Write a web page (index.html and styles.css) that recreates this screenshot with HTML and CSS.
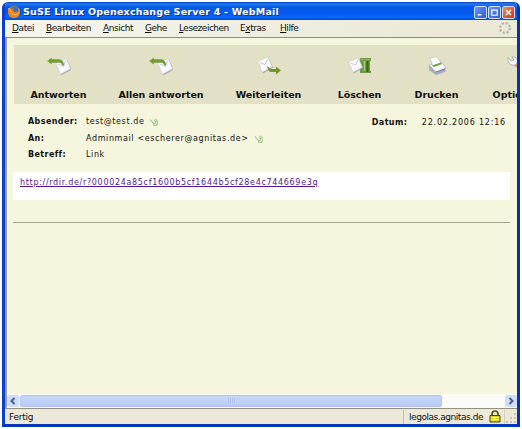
FILE: index.html
```
<!DOCTYPE html>
<html lang="de">
<head>
<meta charset="utf-8">
<title>SuSE Linux Openexchange Server 4 - WebMail</title>
<link rel="stylesheet" href="styles.css">
</head>
<body>
<svg class="defs" width="0" height="0" aria-hidden="true">
  <defs>
    <linearGradient id="paper" x1="0" y1="0" x2="1" y2="1"><stop offset="0" stop-color="#fff"/><stop offset=".6" stop-color="#fafaff"/><stop offset="1" stop-color="#dfe0ec"/></linearGradient>
    <g id="envelope">
      <path d="M1 5 12 0 17 11 6 17Z" fill="#8e90a5" opacity=".75" transform="translate(.9 1)"/>
      <path d="M1 5 12 0 17 11 6 17Z" fill="url(#paper)" stroke="#c8cad8" stroke-width=".6"/>
      <path d="m3 6 6 2.500L11.500 2" fill="none" stroke="#b0b2c6" stroke-width=".8"/>
    </g>
    <symbol id="reply" viewBox="0 0 24 20">
      <use href="#envelope" transform="translate(8 2.500) scale(.93)"/>
      <path d="M.500 5 4.500 2v1.500h7c3.500 0 5 2 5.500 6l-2-.8c-.6-2-1.500-2.300-3.500-2.300h-7V8Z" fill="#729f32" stroke="#6a9530" stroke-width=".4"/>
    </symbol>
    <symbol id="clip" viewBox="0 0 10 10">
      <path d="M1 2.500 4 6c1 1 3 .5 2.500-1L5.500 2.500M4 7.500c2 1.700 5 .8 4.500-2L7 2" fill="none" stroke="#9dc788" stroke-width="1.100"/>
      <path d="m6 2 2 .5.500 4" fill="none" stroke="#c0d8ad"/>
    </symbol>
  </defs>
</svg>
<div class="window">
  <header class="titlebar">
    <svg class="fox" viewBox="0 0 14 14"><circle cx="7" cy="7" r="6" fill="#f18a22"/><circle cx="7.300" cy="5.500" r="3.900" fill="#3b71b8"/><path d="M1.500 3 4 4l3-.5L5.800 5l2 2.200 3.200-.7L12.500 3c1.500 5-1 10-5.500 10S0 8 1.500 3Z" fill="#ed7f20"/><path d="m1.500 3 2 2.500L5 9l4 1 2.500-2" fill="none" stroke="#ffc65b"/></svg>
    <h1 class="title">SuSE Linux Openexchange Server 4 - WebMail</h1>
    <div class="controls">
      <span class="control"><svg viewBox="0 0 12 12"><path d="M3 8.500h4" stroke="#fff" stroke-width="1.800"/></svg></span>
      <span class="control"><svg viewBox="0 0 12 12"><path d="M3 3.500h6V9H3Z" fill="none" stroke="#fff" stroke-width="1.300"/></svg></span>
      <span class="control close"><svg viewBox="0 0 12 12"><path d="m3.300 3.300 5.400 5.400m0-5.400L3.300 8.700" stroke="#fff" stroke-width="1.600"/></svg></span>
    </div>
  </header>
  <nav class="menubar">
    <span class="m-datei"><u>D</u>atei</span><span class="m-bearbeiten"><u>B</u>earbeiten</span><span class="m-ansicht"><u>A</u>nsicht</span><span class="m-gehe"><u>G</u>ehe</span><span class="m-lesezeichen"><u>L</u>esezeichen</span><span class="m-extras">E<u>x</u>tras</span><span class="m-hilfe"><u>H</u>ilfe</span>
    <svg class="throbber" viewBox="0 0 14 14"><circle cx="7" cy="7" r="4.900" fill="none" stroke="#b3b2a9" stroke-width="2.200" stroke-dasharray="2.200 1.648"/></svg>
  </nav>
  <main class="page">
    <div class="toolbar">
      <div class="tool t-reply"><svg><use href="#reply"/></svg><b>Antworten</b></div>
      <div class="tool t-all"><svg><use href="#reply"/></svg><b>Allen antworten</b></div>
      <div class="tool t-forward"><svg viewBox="0 0 24 20"><use href="#envelope" transform="translate(0 1) scale(.9)"/><path d="m10 10 4 3h5v-2.500l5 4-5 4V16h-5c-2 0-3-2-4-6Z" fill="#71962e"/></svg><b>Weiterleiten</b></div>
      <div class="tool t-delete"><svg viewBox="0 0 24 20"><path d="M12 2h11v3h-1v10h1v2H12Z" fill="#6a9c3a"/><path d="M16.500 5v10" stroke="#a5c878" stroke-width="1.500"/><path d="M19.500 5v11" stroke="#396a18" stroke-width="2.200"/><path d="M12.500 3.500h10" stroke="#8ab55c"/><use href="#envelope" transform="translate(0 2) scale(.85)"/></svg><b>Löschen</b></div>
      <div class="tool t-print"><svg viewBox="0 0 24 20"><path d="m4 9 12-4 5 7-1 4-9 3-7-5Z" fill="#a7abc0"/><path d="m4 9 12-4 5 7-10 4Z" fill="#f8f8fc" stroke="#a6aabd" stroke-width=".6"/><path d="m5 2 7-1 4 6-8 3Z" fill="#fff" stroke="#b5c0b7" stroke-width=".6"/><path d="m7 9.500 9-3 1 1.500-8 3Z" fill="#719d48"/><path d="m11 16 9-3" stroke="#777e9c"/></svg><b>Drucken</b></div>
      <div class="tool t-options"><svg viewBox="0 0 24 20"><path d="m9 7 10 10" stroke="#e2a044" stroke-width="3"/><path d="M3 1.500 6 5l3-1-2-3c4-1 7 3 4.500 7C8 11 2 8 3 1.500Z" fill="#f3f3fa" stroke="#a3a5bc" stroke-width=".8"/></svg><b>Optionen</b></div>
    </div>
    <section class="headers">
      <dl class="fields">
        <dt>Absender:</dt><dd><span class="v1">test@test.de</span><svg><use href="#clip"/></svg></dd>
        <dt>An:</dt><dd><span class="v2">Adminmail &lt;escherer@agnitas.de&gt;</span><svg><use href="#clip"/></svg></dd>
        <dt>Betreff:</dt><dd><span class="v1">Link</span></dd>
      </dl>
      <div class="date"><b>Datum:</b><span>22.02.2006 12:16</span></div>
    </section>
    <article class="message"><a href="#">http://rdir.de/r?000024a85cf1600b5cf1644b5cf28e4c744669e3q</a></article>
    <hr class="rule">
  </main>
  <div class="scrollbar">
    <span class="arrow"><svg viewBox="0 0 12 12"><path d="M7.500 3 4.500 6l3 3" fill="none" stroke="#4d6185" stroke-width="2"/></svg></span>
    <span class="thumb"><i></i></span>
    <span class="arrow right"><svg viewBox="0 0 12 12"><path d="m4.500 3 3 3-3 3" fill="none" stroke="#4d6185" stroke-width="2"/></svg></span>
  </div>
  <footer class="status">
    <span class="ready">Fertig</span>
    <div class="host"><span>legolas.agnitas.de</span><svg class="lock" viewBox="0 0 12 13"><path d="M3 6V4c0-4 6-4 6 0v2" fill="none" stroke="#55551c" stroke-width="1.700"/><path d="M1 5.500h10V12H1Z" fill="#dfd52a" stroke="#4c4a0a"/><path d="M2.500 7.500h7m-7 2h7" stroke="#fffb8e"/></svg></div>
    <svg class="grip" viewBox="0 0 12 12"><path d="M9 2h2v2H9zM5 6h2v2H5zM9 6h2v2H9zM1 10h2v2H1zM5 10h2v2H5zM9 10h2v2H9z" fill="#c9c5b3"/></svg>
  </footer>
</div>
</body>
</html>
```
FILE: styles.css
```
* { box-sizing: border-box; }
body { margin: 0; width: 522px; height: 429px; padding: 2px; overflow: hidden; background: #fff; font-family: "DejaVu Sans", sans-serif; color: #111; }
svg { display: block; flex: none; }
.defs { position: absolute; }
.window { width: 518px; height: 425px; display: flex; flex-direction: column; border: solid #0841cf; border-width: 0 3px 3px; border-right-color: #0630b5; border-bottom-color: #0634bd; border-radius: 6px 6px 0 0; overflow: hidden; background: #ece9d8; }
.titlebar { flex: 0 0 18px; margin: 0 -3px; padding: 2px 5px 0 5px; display: flex; align-items: center; background: linear-gradient(#0842bd 0, #227bf5 2px, #0659e7 5px, #0559ec 11px, #0769ff 15px, #0347ca 18px); }
.fox { width: 14px; height: 14px; }
.title { margin: 0 0 0 2px; flex: 1; font-size: 9.5px; line-height: 16px; color: #fff; letter-spacing: .22px; white-space: nowrap; text-shadow: 1px 1px #08338f; }
.controls { display: flex; gap: 1px; }
.control { width: 13px; height: 13px; border: 1px solid #cfdcfa; border-radius: 2px; background: linear-gradient(135deg, #6c96f5, #255ddb); }
.control svg { width: 11px; height: 11px; }
.close { background: linear-gradient(135deg, #f08a6c, #cc3512); }
.menubar { flex: 0 0 18px; display: flex; align-items: center; padding: 0 5px 1px 7px; border-bottom: 1px solid #8e8c7c; background: linear-gradient(90deg, #f6f5ee, #ece9d8 85%); font: 9px/16px "DejaVu Sans", sans-serif; letter-spacing: -.45px; white-space: nowrap; }
.m-datei { width: 34px; letter-spacing: -.4px; }
.m-bearbeiten { width: 57px; }
.m-ansicht { width: 42px; }
.m-gehe { width: 34px; }
.m-lesezeichen { width: 61px; letter-spacing: -.5px; }
.m-extras { width: 40px; }
.m-hilfe { flex: 1; }
.throbber { width: 14px; height: 14px; }
.page { flex: 1; min-height: 0; padding: 7px 0 0 7px; border-left: 2px solid #9a9b92; background: #f6f6de; overflow: hidden; }
.toolbar { height: 59px; display: flex; background: #e2e1c5; overflow: hidden; }
.tool { flex: none; display: flex; flex-direction: column; align-items: center; padding-top: 11px; gap: 12px; white-space: nowrap; }
.tool svg { width: 24px; height: 20px; }
.tool b { font-size: 9.5px; line-height: 13px; letter-spacing: -.05px; }
.t-reply { width: 89px; }
.t-all { width: 116px; }
.t-forward { width: 99px; }
.t-delete { width: 83px; }
.t-print { width: 71px; }
.t-options { width: 90px; }
.headers { height: 68px; display: flex; justify-content: space-between; padding: 10px 11px 0 14px; font-size: 8px; line-height: 16.500px; white-space: nowrap; }
.fields { margin: 0; display: grid; grid-template-columns: 58px auto; grid-auto-rows: 16.500px; }
.fields dt { font-weight: bold; letter-spacing: .4px; }
.fields dd { margin: 0; display: flex; align-items: center; gap: 5px; }
.fields dd svg { width: 10px; height: 10px; }
.v1 { letter-spacing: .6px; }
.v2 { letter-spacing: .62px; }
.date { display: flex; padding-top: 1px; letter-spacing: .8px; }
.date b { width: 50px; letter-spacing: .4px; }
.message { height: 28px; margin: 0 7px 0 -1px; padding: 4px 7px; background: #fff; font-size: 8px; line-height: 14px; }
.message a { color: #551a8b; letter-spacing: .68px; }
.rule { margin: 22px 7px 0 -1px; border: 0; height: 1px; background: #a6a58f; }
.scrollbar { flex: 0 0 14px; display: flex; padding: 1px 0; border-left: 2px solid #9a9b92; background: #fbfbf7; }
.arrow { width: 12px; height: 12px; border-radius: 2px; background: #cfddfc; }
.arrow svg { width: 12px; height: 12px; }
.right { margin-left: auto; }
.thumb { width: 422px; margin-left: 1px; border: 1px solid #afc3f5; border-radius: 2px; background: linear-gradient(#c9d7fe, #bacbf9); display: flex; align-items: center; justify-content: center; }
.thumb i { width: 8px; height: 6px; background: repeating-linear-gradient(90deg, #cad8fd 0 1px, #b0c3f3 1px 2px); }
.status { flex: 0 0 16px; display: flex; align-items: center; border-top: 1px solid #929080; background: #ece9d8; font-size: 9px; line-height: 14px; letter-spacing: -.45px; white-space: nowrap; }
.ready { flex: 1; padding-left: 4px; letter-spacing: -.25px; }
.host { height: 14px; width: 102px; display: flex; align-items: center; gap: 6px; padding-left: 5px; border-left: 1px solid #c2bfac; border-right: 1px solid #d0cdbb; }
.lock { width: 12px; height: 13px; }
.grip { width: 12px; height: 12px; }
```
